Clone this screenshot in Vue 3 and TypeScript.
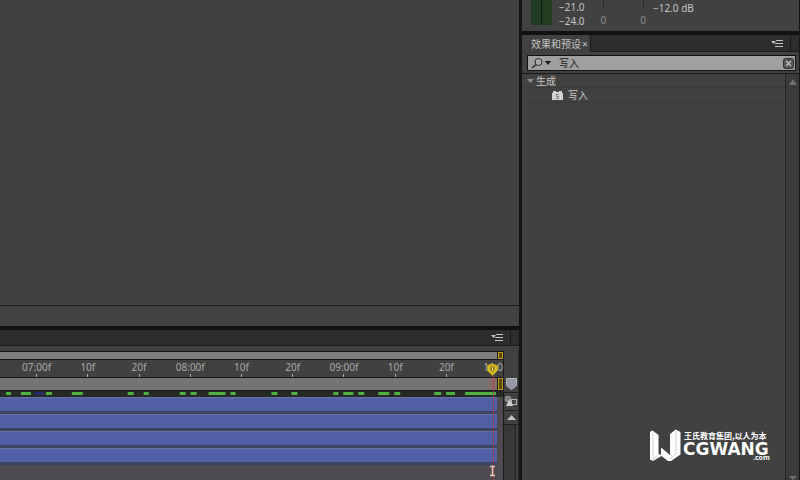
<script setup lang="ts">
import { ref } from 'vue'

interface Segment {
  from: number
  to: number
  color: string
}

const query = ref<string>('写入')
const open = ref<boolean>(true)

const labels: string[] = ['07:00f', '10f', '20f', '08:00f', '10f', '20f', '09:00f', '10f', '20f']
const layers: number[] = [1, 2, 3, 4]

const green = '#4fb045'
const spans: [number, number][] = [
  [6, 11], [21, 31], [46, 52], [72, 83], [128, 134], [144, 149], [180, 186], [191, 197],
  [209, 226], [231, 236], [272, 278], [292, 298], [334, 339], [344, 354], [359, 365],
  [379, 390], [395, 401], [435, 442], [447, 456], [466, 497],
]
const cached: Segment[] = [
  ...spans.map(([from, to]) => ({ from, to, color: green })),
  { from: 35, to: 44, color: '#28296c' },
]
</script>

<template>
  <div class="app">
    <main class="left">
      <section class="viewer" aria-label="合成"></section>
      <div class="viewer-foot"></div>
      <section class="timeline" aria-label="时间轴">
        <header class="tabbar">
          <button class="menu" type="button" aria-label="面板菜单">
            <svg width="13" height="9" viewBox="0 0 13 9">
              <path d="M0 2h5L2.500 5z" fill="#c4c4c4" />
              <path d="M5 1.500h7M4 4.500h8M4 7.500h8" stroke="#c4c4c4" stroke-width="1" />
            </svg>
          </button>
          <span class="grip"></span>
        </header>
        <div class="time-body">
          <div class="tracks">
            <div class="navigator"><span class="bracket"></span></div>
            <div class="ruler">
              <div v-for="(label, i) in labels" :key="i" class="mark">{{ label }}</div>
              <span class="last-mark">10:0</span>
            </div>
            <div class="workarea"><span class="bracket"></span></div>
            <svg class="cache" viewBox="0 0 504 6" preserveAspectRatio="none">
              <rect v-for="s in cached" :key="s.from" :x="s.from" y="1" :width="s.to - s.from" height="3" :fill="s.color" />
            </svg>
            <div class="layers">
              <div v-for="n in layers" :key="n" class="layer"></div>
            </div>
            <svg class="playhead" width="14" height="117" viewBox="0 0 14 117">
              <path d="M7.500 13V117" stroke="#a8384a" stroke-width="1" opacity=".8" />
              <rect x="3" y="15" width="7" height="11" fill="#b4534a" opacity=".3" />
              <path d="M1.500 2.500Q6.500-.5 11.500 2.500V7.500L6.500 12.500L1.500 7.500z" fill="#d9bb22" stroke="#b0951c" />
              <path d="M4.500 3.500h4v3l-2 3-2-3z" fill="#806b12" />
              <path d="M6.500 4v4" stroke="#f3df63" />
              <path d="M4 103.500h2l.5 1 .5-1h2M4 112.500h2l.5-1 .5 1h2M6.500 104v8" fill="none" stroke="#e9c9b8" stroke-width="1.500" />
            </svg>
          </div>
          <aside class="side">
            <button class="tool marker" type="button" aria-label="标记">
              <svg width="11" height="12" viewBox="0 0 11 12">
                <path d="M.5.5h10v7l-5 4-5-4z" fill="#9299a4" stroke="#b4b6ba" />
              </svg>
            </button>
            <button class="tool comp" type="button" aria-label="合成按钮">
              <svg width="12" height="11" viewBox="0 0 12 11">
                <rect x=".5" y=".5" width="5" height="5" rx="2" fill="#777" stroke="#b0b0b0" />
                <rect x="6.500" y="3.500" width="5" height="5" fill="#444" stroke="#b5b5b5" />
                <path d="M1 10L4.500 3 8 10z" fill="#d0d0d0" />
              </svg>
            </button>
            <button class="tool up" type="button" aria-label="向上滚动">
              <svg width="9" height="6" viewBox="0 0 9 6"><path d="M0 5L4.500 0 9 5z" fill="#c4c4c4" /></svg>
            </button>
            <div class="side-track"></div>
          </aside>
        </div>
      </section>
    </main>

    <div class="right">
      <section class="audio" aria-label="音频">
        <div class="meter"></div>
        <div class="scale"><span>−21.0</span><span>−24.0</span></div>
        <div class="sliders">
          <div class="channel"><i></i><span>0</span></div>
          <div class="channel"><i></i><span>0</span></div>
        </div>
        <span class="level">−12.0 dB</span>
      </section>

      <section class="effects">
        <header class="tabbar">
          <div class="tab">效果和预设
            <button class="close" type="button" aria-label="关闭">×</button>
          </div>
          <button class="menu" type="button" aria-label="面板菜单">
            <svg width="13" height="9" viewBox="0 0 13 9">
              <path d="M0 2h5L2.500 5z" fill="#c4c4c4" />
              <path d="M5 1.500h7M4 4.500h8M4 7.500h8" stroke="#c4c4c4" stroke-width="1" />
            </svg>
          </button>
          <span class="grip"></span>
        </header>
        <div class="search">
          <label class="field">
            <svg width="22" height="12" viewBox="0 0 22 12">
              <circle cx="7.500" cy="5" r="3.500" fill="#a9a9a9" stroke="#292929" />
              <path d="M5 7.500L1 11" stroke="#292929" stroke-width="1.500" />
              <path d="M14 4h6l-3 4z" fill="#161616" />
            </svg>
            <input v-model="query" type="text" aria-label="搜索效果" />
          </label>
          <button class="clear" type="button" aria-label="清除" @click="query = ''">
            <svg width="11" height="11" viewBox="0 0 11 11">
              <rect x=".5" y=".5" width="10" height="10" rx="2" fill="#555" stroke="#333" />
              <path d="M3 3l5 5M8 3L3 8" stroke="#c8c8c8" stroke-width="1.200" />
            </svg>
          </button>
        </div>
        <div class="results">
          <div class="tree">
            <button class="row group" type="button" :aria-expanded="open" @click="open = !open">
              <svg width="8" height="6" viewBox="0 0 8 6"><path d="M1 1h7L4.500 5z" fill="#8c8c8c" /></svg>
              生成
            </button>
            <div v-if="open" class="row item">
              <svg width="11" height="10" viewBox="0 0 11 10">
                <path d="M0 3h1V1h3v1h3V1h3v2h1v7H0z" fill="#d2d2d2" />
                <path d="M4 4h3v1H5v1h2v3H4V8h2V7H4z" fill="#858585" />
              </svg>
              写入
            </div>
            <svg class="brand" width="124" height="34" viewBox="0 0 124 34" role="img" aria-label="王氏教育集团 CGWANG.com">
              <path d="M1 3L3.500 1.500L9.500 6V25L12 26V18.500L21 26V5L26.700.5L31.500 3V25.500L22 32H19L12.500 27L4 32L1 30.500z" fill="#fff" />
              <path d="M4 3V30.500L9.500 25M27 2V24.500L21 30" fill="none" stroke="#b5b5b5" stroke-width=".6" />
              <text x="35" y="10" class="slogan">王氏教育集团,以人为本</text>
              <text x="34" y="26" class="name">CGWANG</text>
              <text x="104" y="31" class="domain">.com</text>
            </svg>
          </div>
          <div class="scrollbar">
            <svg width="8" height="6" viewBox="0 0 8 6"><path d="M0 6L4 0l4 6z" fill="#707070" /></svg>
            <svg width="8" height="4" viewBox="0 0 8 4"><path d="M0 0h8L4 4z" fill="#707070" /></svg>
          </div>
        </div>
      </section>
    </div>
  </div>
</template>

<style>
body {
  margin: 0;
  background: #151515;
}
</style>

<style scoped>
.app {
  display: grid;
  grid-template-columns: minmax(0, 65fr) minmax(0, 35fr);
  height: 100vh;
  overflow: hidden;
  font: 10px/14px "Noto Sans", "Noto Sans CJK SC", sans-serif;
  color: #c6c6c6;
  background: #151515;
}
button {
  margin: 0;
  padding: 0;
  border: 0;
  background: none;
  color: inherit;
  font: inherit;
}
svg {
  display: block;
  flex: none;
}
.left {
  display: flex;
  flex-direction: column;
  min-width: 0;
  border-right: 1px solid #151515;
}
.viewer {
  flex: 1;
  background: #414141;
  border-bottom: 1px solid #1d1d1d;
}
.viewer-foot {
  height: 20px;
  background: #424242;
}
.timeline {
  border-top: 4px solid #111;
  background: #414141;
}
.tabbar {
  display: flex;
  align-items: center;
  height: 15px;
  background: #2d2d2d;
  border-bottom: 1px solid #1e1e1e;
}
.menu {
  margin-left: auto;
}
.grip {
  align-self: stretch;
  width: 8px;
  margin-left: 6px;
  border-left: 1px solid #191919;
}
.time-body {
  display: grid;
  grid-template-columns: minmax(0, 1fr) 15px;
  padding-top: 5px;
}
.tracks {
  position: relative;
  border-right: 1px solid #1a1a1a;
}
.navigator,
.workarea {
  display: flex;
  justify-content: flex-end;
  background: #808080;
  border: solid #171717;
  border-width: 1px 0;
}
.navigator {
  height: 7px;
}
.workarea {
  height: 12px;
  background: #747474;
}
.bracket {
  width: 2px;
  padding-left: 1px;
  border: 1px solid #b99820;
  background: #5a4912;
  box-shadow: -1px 0 #29230e;
}
.ruler {
  position: relative;
  display: grid;
  grid-template-columns: repeat(9, 1fr);
  height: 17px;
  padding: 0 31px 0 11px;
  overflow: hidden;
  color: #a9a9a9;
}
.mark {
  display: flex;
  flex-direction: column;
  align-items: center;
}
.mark::after {
  content: "";
  width: 1px;
  height: 3px;
  background: #b0b0b0;
}
.last-mark {
  position: absolute;
  right: 0;
  top: 0;
}
.cache {
  width: 100%;
  height: 6px;
  background: #252a25;
}
.layers {
  height: 83px;
  background: #4e4c51;
}
.layer {
  height: 13px;
  margin-right: 6px;
  background: #515fa6;
  border-top: 1px solid #6871a1;
  border-bottom: 3px solid #3b4460;
}
.playhead {
  position: absolute;
  right: 3px;
  bottom: 0;
}
.side {
  display: flex;
  flex-direction: column;
  padding-top: 24px;
  border-right: 1px solid #292929;
}
.tool {
  display: flex;
  align-items: center;
  justify-content: center;
  border-bottom: 1px solid #222;
}
.marker {
  height: 18px;
}
.comp {
  height: 18px;
}
.up {
  height: 14px;
}
.side-track {
  flex: 1;
  margin-right: 2px;
  background: #383838;
  border-right: 1px solid #222;
}
.right {
  display: flex;
  flex-direction: column;
  min-width: 0;
  padding: 0 1px 0 2px;
}
.audio {
  display: flex;
  height: 31px;
  padding-left: 9px;
  background: #414141;
  border-bottom: 4px solid #111;
}
.meter {
  width: 21px;
  height: 25px;
  background: linear-gradient(90deg, #213c20 10px, #101c10 10px, #101c10 11px, #213c20 11px);
}
.scale {
  display: flex;
  flex-direction: column;
  padding-left: 7px;
}
.sliders {
  display: flex;
  gap: 34px;
  padding-left: 16px;
  color: #8a8a8a;
}
.channel {
  display: flex;
  flex-direction: column;
  align-items: center;
}
.channel i {
  width: 1px;
  height: 8px;
  margin-bottom: 5px;
  background: #2c2c2c;
}
.level {
  padding: 1px 0 0 7px;
}
.effects {
  display: flex;
  flex: 1;
  flex-direction: column;
  min-height: 0;
  background: #414141;
}
.effects .tabbar {
  height: 16px;
}
.tab {
  display: flex;
  align-items: center;
  gap: 1px;
  align-self: stretch;
  margin-bottom: -1px;
  padding: 0 2px 0 9px;
  background: #414141;
  border-right: 1px solid #1a1a1a;
}
.effects .grip {
  width: 8px;
}
.search {
  display: flex;
  align-items: center;
  height: 14px;
  margin: 3px 3px 2px 5px;
  padding-right: 1px;
  background: #a0a0a0;
  border: 1px solid #111;
}
.field {
  display: flex;
  flex: 1;
  align-items: center;
  min-width: 0;
  padding-left: 3px;
  gap: 6px;
}
.field input {
  flex: 1;
  min-width: 0;
  height: 14px;
  padding: 0;
  border: 0;
  outline: 0;
  background: none;
  color: #181818;
  font: inherit;
}
.results {
  display: flex;
  flex: 1;
  min-height: 0;
  border-top: 1px solid #191919;
}
.tree {
  display: flex;
  flex: 1;
  flex-direction: column;
}
.row {
  display: flex;
  align-items: center;
  height: 14px;
  border-bottom: 1px solid #3a3a3a;
}
.group {
  gap: 2px;
  padding-left: 4px;
}
.item {
  gap: 5px;
  padding-left: 30px;
}
.brand {
  align-self: flex-end;
  margin: auto 12px 17px 0;
}
.brand text {
  fill: #fff;
}
.slogan {
  font: bold 8px "Noto Sans CJK SC", sans-serif;
}
.name {
  font: bold 17px "DejaVu Sans", sans-serif;
}
.domain {
  font: bold 7px "Noto Sans", sans-serif;
}
.scrollbar {
  display: flex;
  flex-direction: column;
  align-items: center;
  justify-content: space-between;
  width: 13px;
  padding: 5px 0 0;
  background: #3a3a3a;
  border-left: 1px solid #242424;
}
</style>
